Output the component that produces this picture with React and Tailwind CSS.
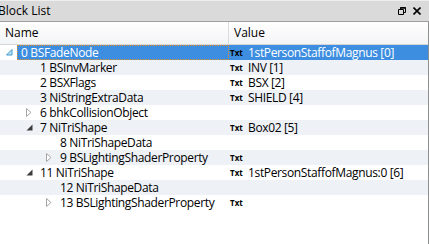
import React from "react";

const rows = [
  { id: 0, name: "BSFadeNode", level: 0, arrow: "open", value: "1stPersonStaffofMagnus [0]", selected: true },
  { id: 1, name: "BSInvMarker", level: 1, value: "INV [1]" },
  { id: 2, name: "BSXFlags", level: 1, value: "BSX [2]" },
  { id: 3, name: "NiStringExtraData", level: 1, value: "SHIELD [4]" },
  { id: 6, name: "bhkCollisionObject", level: 1, arrow: "closed", noTxt: true },
  { id: 7, name: "NiTriShape", level: 1, arrow: "open", value: "Box02 [5]" },
  { id: 8, name: "NiTriShapeData", level: 2, noTxt: true },
  { id: 9, name: "BSLightingShaderProperty", level: 2, arrow: "closed", value: "" },
  { id: 11, name: "NiTriShape", level: 1, arrow: "open", value: "1stPersonStaffofMagnus:0 [6]" },
  { id: 12, name: "NiTriShapeData", level: 2, noTxt: true },
  { id: 13, name: "BSLightingShaderProperty", level: 2, arrow: "closed", value: "" },
];

const Arrow = ({ kind, selected }) => {
  if (kind === "open") {
    return selected ? (
      <svg width="7" height="7" viewBox="0 0 7 7">
        <path d="M6 0.5 L6 6 L0.5 6 Z" fill="#bfe3f7" stroke="#3d9ad0" strokeWidth="1" />
      </svg>
    ) : (
      <svg width="7" height="7" viewBox="0 0 7 7">
        <path d="M6.5 0.5 L6.5 6.5 L0.5 6.5 Z" fill="#3c3c3c" />
      </svg>
    );
  }
  if (kind === "closed") {
    return (
      <svg width="6" height="9" viewBox="0 0 6 9">
        <path d="M0.5 0.5 L5 4.5 L0.5 8.5 Z" fill="#fff" stroke="#a6a6a6" strokeWidth="1" />
      </svg>
    );
  }
  return null;
};

const Row = ({ row, index }) => {
  const odd = index % 2 === 1;
  const indent = row.level * 20;
  return (
    <div className={`flex h-[15px] items-center leading-[15px] ${odd ? "bg-[#eef1f6]" : "bg-white"}`}>
      <div className="flex h-full w-[229px] items-center">
        <div style={{ width: indent }} className="shrink-0" />
        <div className="flex w-[17px] shrink-0 items-center justify-start pl-[6px]">
          <Arrow kind={row.arrow} selected={row.selected} />
        </div>
        <div
          className={`flex h-full flex-1 items-center pl-[3px] tracking-[-0.35px] ${
            row.selected ? "border border-dotted border-[#e0902a] bg-[#3d8ee0] text-white" : "text-black"
          }`}
        >
          {row.id} {row.name}
        </div>
      </div>
      <div className={`flex h-full flex-1 items-center ${row.selected ? "bg-[#3d8ee0] text-white" : ""}`}>
        <span className="w-[19px] pl-[1px] text-[8px] font-bold text-black">
          {row.noTxt ? "" : "Txt"}
        </span>
        <span className="tracking-[-0.35px]">{row.value}</span>
      </div>
    </div>
  );
};

export default function App() {
  return (
    <div
      className="h-[244px] w-[429px] overflow-hidden bg-white text-[12px] leading-none"
      style={{ fontFamily: '"Open Sans", "Noto Sans", sans-serif' }}
    >
      <div className="flex h-[22px] items-center justify-between border-t border-[#eeeeee] border-b border-b-[#a0a0a0] bg-[#dadada] pr-[8px]">
        <span className="ml-[-2px] text-black">Block List</span>
        <div className="flex items-center gap-[7px]">
          <svg width="8" height="8" viewBox="0 0 8 8">
            <path d="M2.5 0.5 H7.5 V5.5 H2.5 Z" fill="none" stroke="#000" strokeWidth="1" />
            <path d="M2.5 1 H7.5" stroke="#000" strokeWidth="1.5" />
            <path d="M0.5 2.5 H5.5 V7.5 H0.5 Z" fill="#dadada" stroke="#000" strokeWidth="1" />
          </svg>
          <svg width="8" height="8" viewBox="0 0 8 8">
            <path d="M0.5 0.5 L7.5 7.5 M7.5 0.5 L0.5 7.5" stroke="#000" strokeWidth="1.6" />
          </svg>
        </div>
      </div>
      <div className="border-r border-[#8e8f8f]">
        <div className="flex h-[23px] border-b border-[#d5d5d5] bg-gradient-to-b from-white to-[#f3f4f6] text-black">
          <div className="flex w-[229px] items-center border-r border-[#dcdcdc] pl-[5px]">Name</div>
          <div className="flex flex-1 items-center pl-[5px]">Value</div>
        </div>
        <div className="h-[199px]">
          {rows.map((row, i) => (
            <Row key={row.id} row={row} index={i} />
          ))}
        </div>
      </div>
    </div>
  );
}
